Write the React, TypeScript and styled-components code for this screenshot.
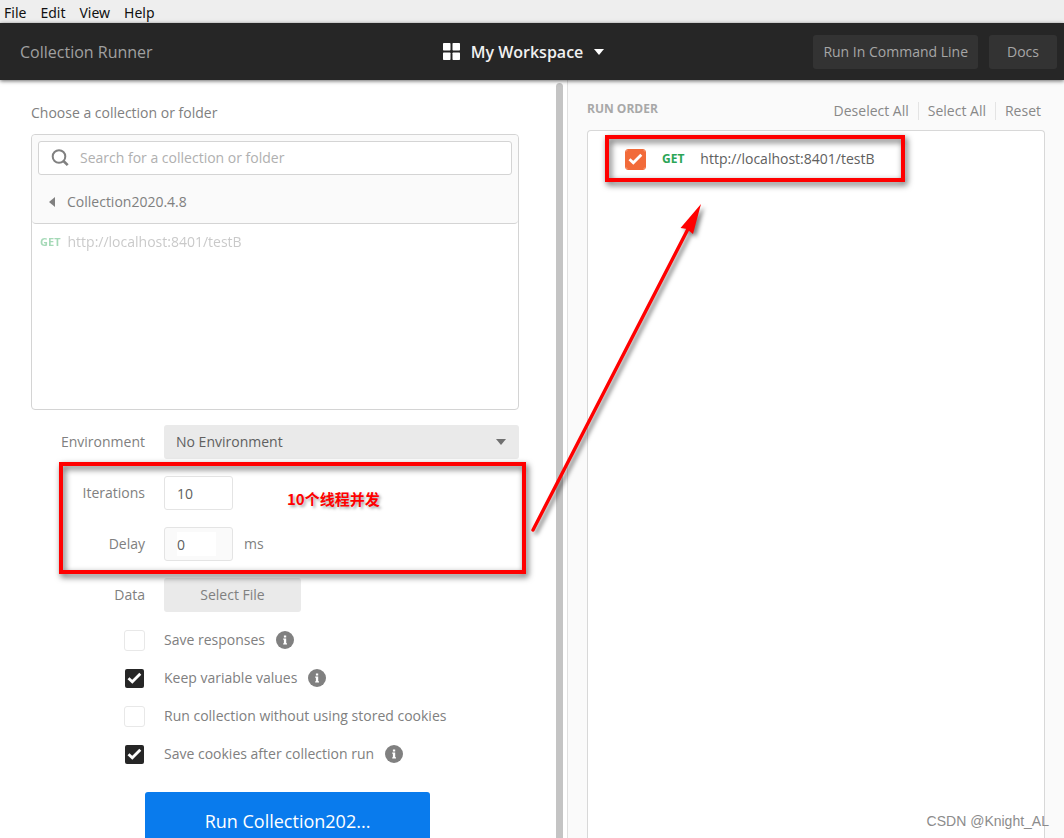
import React from "react";
import styled, { createGlobalStyle } from "styled-components";

const GlobalStyle = createGlobalStyle`
  *, *::before, *::after { box-sizing: border-box; }
  body {
    margin: 0;
    background: #fff;
    color: #808080;
    font-family: "Open Sans", "Noto Sans", "Noto Sans CJK SC", sans-serif;
    font-size: 14px;
    line-height: 20px;
  }
  button, input, select { font: inherit; color: inherit; margin: 0; }
  button { border: 0; padding: 0; background: none; }
`;

const Page = styled.div`
  position: relative;
  display: flex;
  flex-direction: column;
  height: 100vh;
  overflow: hidden;
`;

const MenuBar = styled.nav`
  display: flex;
  flex: none;
  align-items: center;
  gap: 14px;
  height: 23px;
  padding: 2px 4px 0;
  background: #eee;
`;

const MenuItem = styled.button`
  color: #111;
  font-family: "Noto Sans", sans-serif;
`;

const Header = styled.header`
  position: relative;
  z-index: 1;
  display: flex;
  flex: none;
  align-items: center;
  height: 57px;
  padding: 0 7px 0 20px;
  background: #262626;
  box-shadow: 0 1px 4px rgba(0, 0, 0, 0.6);
`;

const Title = styled.h1`
  flex: 1 1 0;
  margin: 0;
  color: #a0a0a0;
  font-size: 16px;
  font-weight: 400;
`;

const Workspace = styled.button`
  display: flex;
  align-items: center;
  gap: 11px;
  padding-right: 30px;
  color: #f0f0f0;
  font-size: 16px;
  font-weight: 600;
`;

const HeaderActions = styled.div`
  display: flex;
  flex: 1 1 0;
  justify-content: flex-end;
  gap: 11px;
`;

const HeaderButton = styled.button`
  height: 34px;
  padding: 0 10px;
  min-width: 68px;
  border-radius: 3px;
  background: #333;
  color: #a6a6a6;
`;

const Body = styled.main`
  display: grid;
  flex: 1;
  grid-template-columns: 567fr 497fr;
  min-height: 0;
`;

const LeftPanel = styled.section`
  display: flex;
  min-height: 0;
  overflow: hidden;
`;

const Setup = styled.form`
  flex: 1;
  padding: 23px 37px 0 31px;
`;

const ScrollThumb = styled.div`
  flex: none;
  width: 7px;
  margin: 3px 4px 0 0;
  border-radius: 4px 4px 0 0;
  background: #c4c4c4;
`;

const Caption = styled.h2`
  margin: 0 0 11px;
  font-size: 14px;
  font-weight: 400;
`;

const Picker = styled.div`
  height: 276px;
  border: 1px solid #d4d4d4;
  border-radius: 4px;
`;

const PickerTop = styled.div`
  height: 89px;
  padding: 6px;
  border-bottom: 1px solid #d4d4d4;
  border-radius: 4px;
  background: #fafafa;
`;

const SearchBox = styled.label`
  display: flex;
  align-items: center;
  gap: 11px;
  height: 34px;
  padding: 0 12px;
  border: 1px solid #d4d4d4;
  border-radius: 3px;
  background: #fff;
`;

const SearchInput = styled.input`
  flex: 1;
  min-width: 0;
  padding: 0;
  border: 0;
  outline: 0;
  background: none;
  &::placeholder { color: #b0b0b0; opacity: 1; }
`;

const Crumb = styled.button`
  display: flex;
  align-items: center;
  gap: 12px;
  height: 40px;
  margin-top: 7px;
  padding: 0 11px;
`;

const Method = styled.span`
  color: #2ba556;
  font-size: 11px;
  font-weight: 700;
`;

const DimRequest = styled.div`
  display: flex;
  align-items: center;
  gap: 7px;
  height: 36px;
  padding: 0 8px;
  opacity: 0.42;
`;

const Fields = styled.div`
  display: grid;
  grid-template-columns: 114px 1fr;
  gap: 17px 19px;
  align-items: center;
  margin-top: 15px;
`;

const FieldLabel = styled.label`
  text-align: right;
`;

const FieldValue = styled.div`
  display: flex;
  align-items: center;
  gap: 11px;
  height: 34px;
`;

const SelectWrap = styled.div`
  display: grid;
  flex: 1;
  align-items: center;
  & > * { grid-area: 1 / 1; }
  & > svg { justify-self: end; margin-right: 13px; pointer-events: none; }
`;

const Select = styled.select`
  appearance: none;
  height: 34px;
  padding: 0 12px;
  border: 0;
  border-radius: 3px;
  background: #eaeaea;
  color: #606060;
`;

const NumberBox = styled.div<{ $muted?: boolean }>`
  width: 69px;
  height: 34px;
  padding: 4px 16px 4px 12px;
  border: 1px solid #e4e4e4;
  border-radius: 3px;
  background: ${(p) => (p.$muted ? "#fafafa" : "#fff")};
`;

const NumberInput = styled.input`
  display: block;
  width: 100%;
  height: 24px;
  padding: 0;
  border: 0;
  outline: 0;
  background: #fff;
  color: #606060;
`;

const FileButton = styled.button`
  width: 137px;
  height: 34px;
  border-radius: 3px;
  background: #eaeaea;
`;

const Options = styled.div`
  display: flex;
  flex-direction: column;
  margin: 9px 0 19px 93px;
`;

const Option = styled.div`
  display: flex;
  align-items: center;
  height: 38px;
`;

const OptionLabel = styled.label`
  display: flex;
  align-items: center;
  gap: 19px;
  margin-right: 11px;
`;

const CheckWrap = styled.span`
  display: grid;
  place-items: center;
  width: 21px;
  height: 21px;
  & > * { grid-area: 1 / 1; }
  & > svg { pointer-events: none; }
  & > input:not(:checked) + svg { display: none; }
`;

const CheckInput = styled.input<{ $accent?: boolean }>`
  appearance: none;
  width: 21px;
  height: 21px;
  border: 1px solid #e8e8e8;
  border-radius: 3px;
  background: #fff;
  &:checked {
    border-color: ${(p) => (p.$accent ? "#f26b3a" : "transparent")};
    background: ${(p) => (p.$accent ? "#f26b3a" : "#262626")};
    background-clip: padding-box;
  }
`;

const RunButton = styled.button`
  display: block;
  width: 285px;
  height: 57px;
  margin-left: 114px;
  border-radius: 3px;
  background: #097bed;
  color: #fff;
  font-size: 18px;
`;

const RightPanel = styled.section`
  display: flex;
  flex-direction: column;
  min-height: 0;
  padding: 19px 19px 0;
  border-left: 1px solid #e0e0e0;
  background: #fafafa;
`;

const OrderHeader = styled.div`
  display: flex;
  align-items: center;
  justify-content: space-between;
  height: 31px;
  padding-bottom: 9px;
`;

const OrderTitle = styled.h2`
  margin: 0;
  padding-bottom: 2px;
  color: #a8a8a8;
  font-size: 12px;
  font-weight: 700;
`;

const OrderActions = styled.div`
  display: flex;
  padding-top: 2px;
`;

const OrderAction = styled.button`
  padding: 0 9px;
  color: #888;
  line-height: 18px;
  & + & { border-left: 1px solid #e4e4e4; }
  &:last-child { padding-right: 4px; }
`;

const OrderList = styled.div`
  flex: 1;
  padding: 9px 37px;
  border: 1px solid #d8d8d8;
  border-bottom: 0;
  border-radius: 4px 4px 0 0;
  background: #fff;
`;

const OrderRow = styled.label`
  display: flex;
  align-items: center;
  height: 38px;
  color: #606060;
  & > ${Method} { margin: 0 16px; font-size: 12px; }
`;

const Highlight = styled.div<{ $x: number; $y: number; $w: number; $h: number }>`
  position: absolute;
  z-index: 2;
  left: ${(p) => p.$x}px;
  top: ${(p) => p.$y}px;
  width: ${(p) => p.$w}px;
  height: ${(p) => p.$h}px;
  border: 4px solid #f00;
  filter: drop-shadow(2px 3px 3px rgba(0, 0, 0, 0.65));
  pointer-events: none;
`;

const Note = styled.p`
  position: absolute;
  z-index: 2;
  left: 287px;
  top: 489px;
  margin: 0;
  color: #f00;
  font-family: "Noto Sans CJK SC", sans-serif;
  font-size: 15px;
  font-weight: 700;
  text-shadow: 2px 2px 3px rgba(0, 0, 0, 0.35);
`;

const Arrow = styled.svg`
  position: absolute;
  z-index: 2;
  left: 520px;
  top: 190px;
  filter: drop-shadow(3px 3px 2px rgba(0, 0, 0, 0.5));
  pointer-events: none;
`;

const Watermark = styled.p`
  position: absolute;
  right: 15px;
  bottom: 7px;
  margin: 0;
  color: #8c8c8c;
  font-family: "Liberation Sans", Arial, sans-serif;
`;

const Caret = ({ color }: { color: string }) => (
  <svg width="10" height="6" viewBox="0 0 10 6" aria-hidden="true">
    <path d="M0 0h10L5 6z" fill={color} />
  </svg>
);

const Check = ({ id, accent, on }: { id: string; accent?: boolean; on?: boolean }) => (
  <CheckWrap>
    <CheckInput id={id} type="checkbox" $accent={accent} defaultChecked={on} />
    <svg width="15" height="12" viewBox="0 0 15 12" aria-hidden="true">
      <path d="M1.5 6.2l3.8 3.6 8-8" fill="none" stroke="#fff" strokeWidth="2.8" />
    </svg>
  </CheckWrap>
);

const Info = () => (
  <svg width="18" height="18" viewBox="0 0 18 18" role="img" aria-label="More information">
    <circle cx="9" cy="9" r="9" fill="#808080" />
    <path d="M7.9 4.4h2.3v2H7.9zM7.2 7.5h3v4.7h.8v1.2H7.2v-1.2h.7V8.7h-.7z" fill="#fff" />
  </svg>
);

const options = [
  { id: "responses", label: "Save responses", on: false, info: true },
  { id: "variables", label: "Keep variable values", on: true, info: true },
  { id: "stored", label: "Run collection without using stored cookies", on: false, info: false },
  { id: "cookies", label: "Save cookies after collection run", on: true, info: true },
];

export default function App() {
  return (
    <Page>
      <GlobalStyle />
      <MenuBar>
        {["File", "Edit", "View", "Help"].map((m) => (
          <MenuItem key={m}>{m}</MenuItem>
        ))}
      </MenuBar>
      <Header>
        <Title>Collection Runner</Title>
        <Workspace>
          <svg width="17" height="17" viewBox="0 0 17 17" fill="#fff" aria-hidden="true">
            <rect width="7.5" height="7.5" rx=".7" />
            <rect x="9.5" width="7.5" height="7.5" rx=".7" />
            <rect y="9.5" width="7.5" height="7.5" rx=".7" />
            <rect x="9.5" y="9.5" width="7.5" height="7.5" rx=".7" />
          </svg>
          My Workspace
          <Caret color="#fff" />
        </Workspace>
        <HeaderActions>
          <HeaderButton>Run In Command Line</HeaderButton>
          <HeaderButton>Docs</HeaderButton>
        </HeaderActions>
      </Header>
      <Body>
        <LeftPanel>
          <Setup onSubmit={(e) => e.preventDefault()}>
            <Caption>Choose a collection or folder</Caption>
            <Picker>
              <PickerTop>
                <SearchBox>
                  <svg width="18" height="18" viewBox="0 0 18 18" fill="none" stroke="#808080" strokeWidth="2" aria-hidden="true">
                    <circle cx="8" cy="7.5" r="6.3" />
                    <path d="M12.5 12l4.2 4.2" strokeWidth="2.6" />
                  </svg>
                  <SearchInput placeholder="Search for a collection or folder" aria-label="Search for a collection or folder" />
                </SearchBox>
                <Crumb type="button">
                  <svg width="6" height="10" viewBox="0 0 6 10" aria-hidden="true">
                    <path d="M6 0v10L0 5z" fill="#808080" />
                  </svg>
                  Collection2020.4.8
                </Crumb>
              </PickerTop>
              <DimRequest>
                <Method>GET</Method>
                http://localhost:8401/testB
              </DimRequest>
            </Picker>
            <Fields>
              <FieldLabel htmlFor="environment">Environment</FieldLabel>
              <SelectWrap>
                <Select id="environment">
                  <option>No Environment</option>
                </Select>
                <Caret color="#707070" />
              </SelectWrap>
              <FieldLabel htmlFor="iterations">Iterations</FieldLabel>
              <FieldValue>
                <NumberBox>
                  <NumberInput id="iterations" defaultValue="10" />
                </NumberBox>
              </FieldValue>
              <FieldLabel htmlFor="delay">Delay</FieldLabel>
              <FieldValue>
                <NumberBox $muted>
                  <NumberInput id="delay" defaultValue="0" />
                </NumberBox>
                ms
              </FieldValue>
              <FieldLabel htmlFor="data">Data</FieldLabel>
              <FieldValue>
                <FileButton id="data" type="button">Select File</FileButton>
              </FieldValue>
            </Fields>
            <Options>
              {options.map((o) => (
                <Option key={o.id}>
                  <OptionLabel htmlFor={o.id}>
                    <Check id={o.id} on={o.on} />
                    {o.label}
                  </OptionLabel>
                  {o.info && <Info />}
                </Option>
              ))}
            </Options>
            <RunButton>Run Collection202...</RunButton>
          </Setup>
          <ScrollThumb />
        </LeftPanel>
        <RightPanel>
          <OrderHeader>
            <OrderTitle>RUN ORDER</OrderTitle>
            <OrderActions>
              <OrderAction>Deselect All</OrderAction>
              <OrderAction>Select All</OrderAction>
              <OrderAction>Reset</OrderAction>
            </OrderActions>
          </OrderHeader>
          <OrderList>
            <OrderRow htmlFor="request">
              <Check id="request" accent on />
              <Method>GET</Method>
              http://localhost:8401/testB
            </OrderRow>
          </OrderList>
        </RightPanel>
      </Body>
      <Highlight $x={59} $y={462} $w={467} $h={112} />
      <Highlight $x={605} $y={135} $w={300} $h={47} />
      <Note>10个线程并发</Note>
      <Arrow width="200" height="350" viewBox="520 190 200 350" aria-hidden="true">
        <path d="M533 530L688 229" stroke="#f00" strokeWidth="3.4" strokeLinecap="round" />
        <path d="M701 204L680.5 228l6.5 1 6 5z" fill="#f00" />
      </Arrow>
      <Watermark>CSDN @Knight_AL</Watermark>
    </Page>
  );
}
